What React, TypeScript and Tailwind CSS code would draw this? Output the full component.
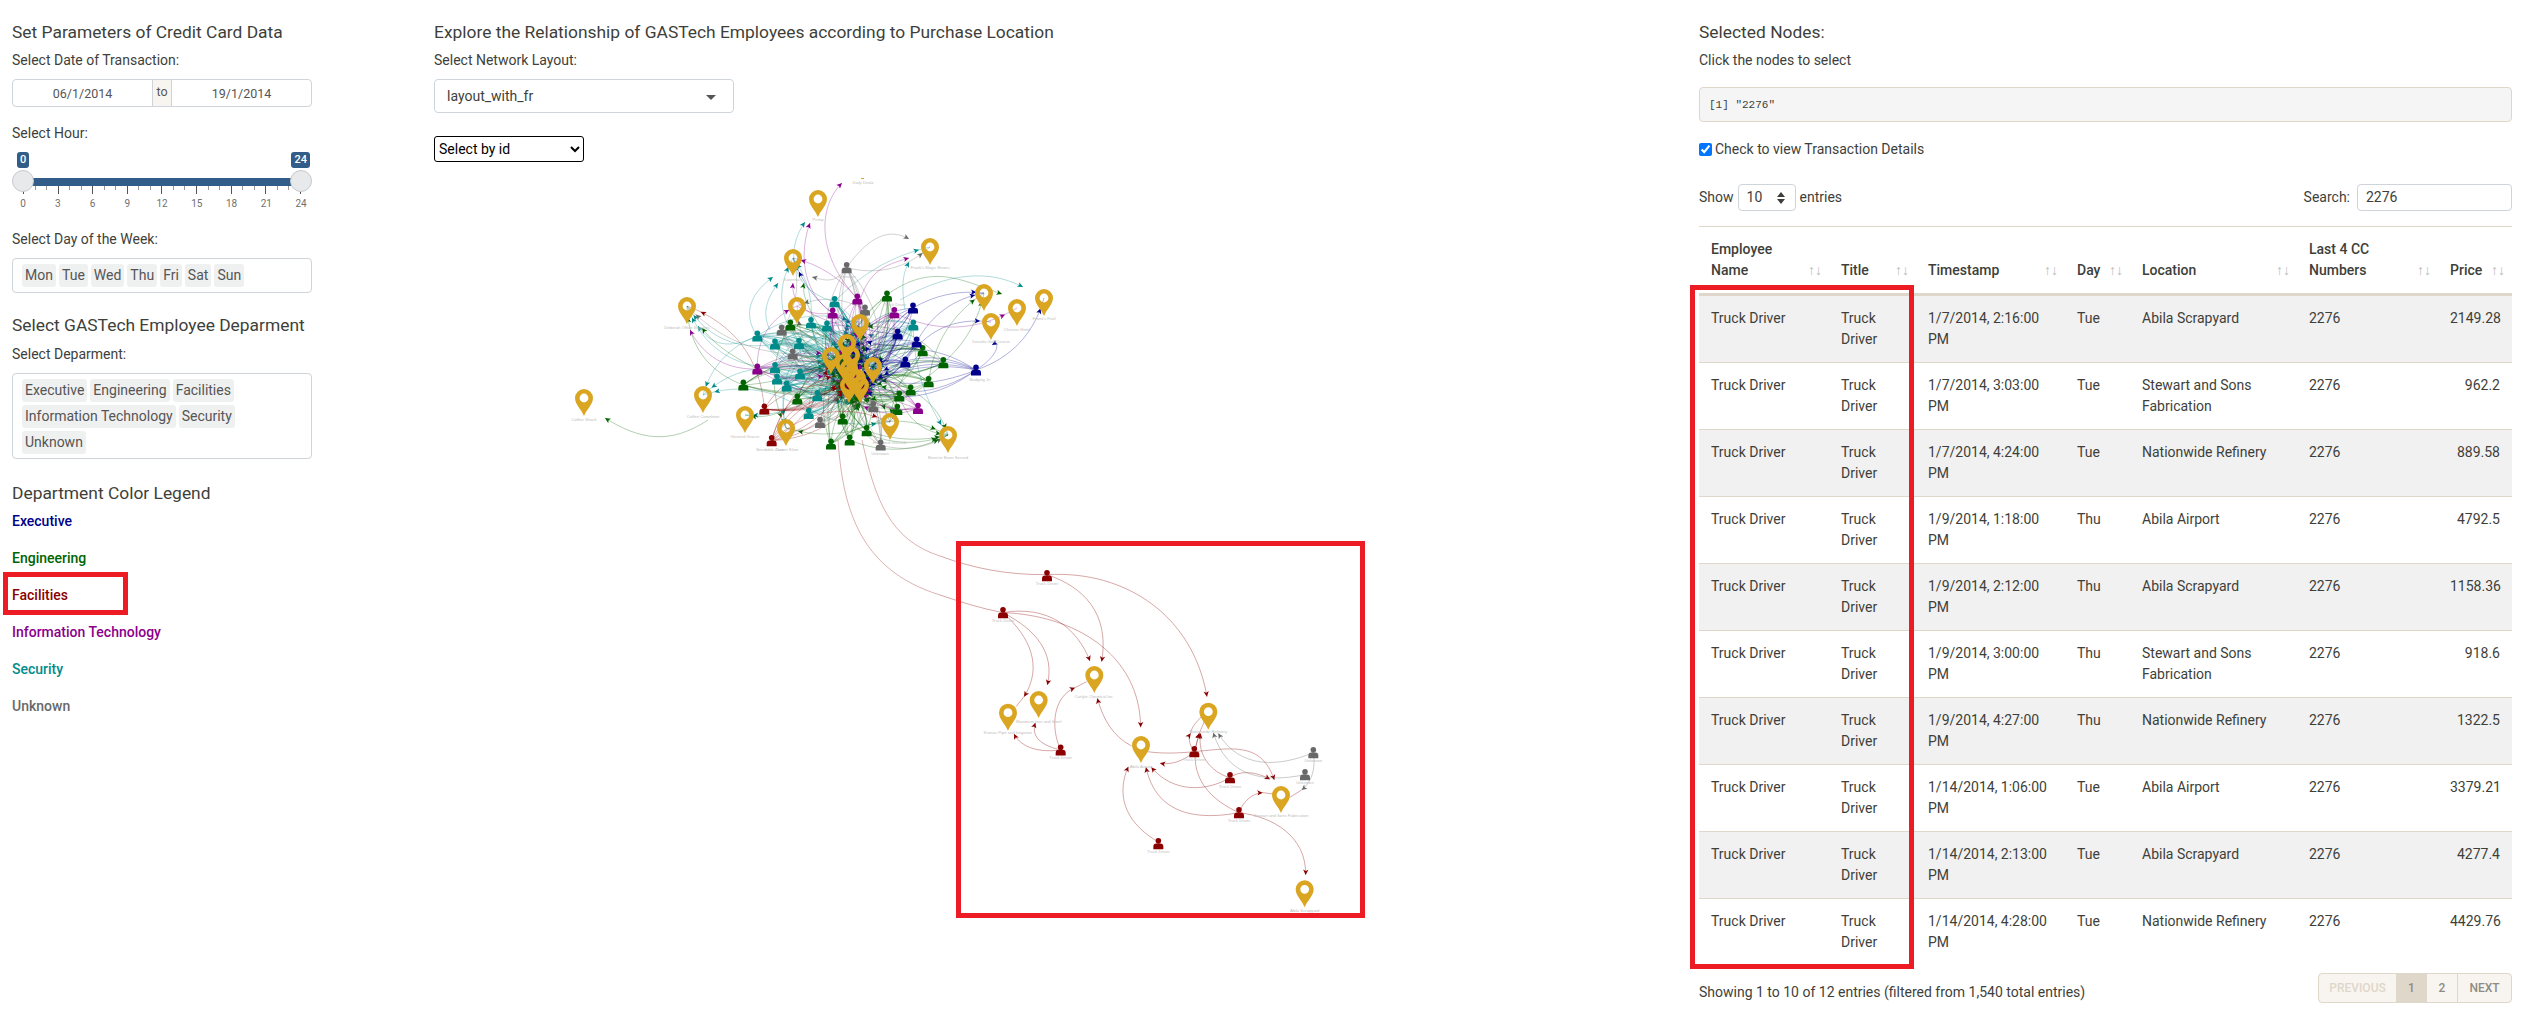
import React from "react";

const GOLD = "#daa520";
const C: Record<string, string> = { navy: "#00008b", green: "#006400", red: "#8b0000", purple: "#8b008b", teal: "#008b8b", grey: "#696969" };

type P = [number, number, string];
// upper cluster people, in page coordinates
const people: P[] = ([
  [172,408,"teal"],[225,432,"teal"],[297,430,"teal"],[225,503,"teal"],[231,537,"teal"],[300,522,"teal"],[260,558,"teal"],[352,587,"teal"],[326,640,"teal"],[404,305,"teal"],[333,368,"teal"],[381,378,"teal"],[640,375,"teal"],
  [440,203,"grey"],[245,390,"grey"],[278,462,"grey"],[495,330,"grey"],[360,667,"grey"],[520,620,"grey"],[542,735,"grey"],
  [561,288,"green"],[271,375,"green"],[130,555,"green"],[292,597,"green"],[428,657,"green"],[500,692,"green"],[393,732,"green"],[449,720,"green"],[668,452,"green"],[730,488,"green"],[686,545,"green"],[632,570,"green"],[598,588,"green"],[592,628,"green"],
  [472,297,"purple"],[398,339,"purple"],[583,338,"purple"],[172,507,"purple"],[654,625,"purple"],
  [639,324,"navy"],[593,402,"navy"],[650,426,"navy"],[616,486,"navy"],[828,510,"navy"],
  [193,627,"red"],[215,722,"red"],
] as P[]).map(([x, y, c]) => [700 + x / 3, 200 + y / 3, c] as P);

const outerPins: [number, number][] = [[818,199],[930,247],[793,258],[797,306],[687,306],[984,293],[1017,308],[1044,298],[991,322],[703,395],[745,415],[786,428],[890,422],[948,435]];
const centerPins: [number, number][] = [[860,323],[847,343],[831,356],[873,366],[851,355],[849,368],[844,363],[860,385],[849,385],[852,376],[857,378]];

const upperLabels: [number, number, string][] = [
  [863,184,"Daily Dealz"],[818,221,"Pump"],[930,269,"Frank's Magic Beans"],[793,281,"Katerina's"],[687,329,"Deborah Office Supplies"],[1017,331,"Chostus Hotel"],[1044,320,"Frank's Fuel"],[991,343,"Desafio Golf Course"],[703,418,"Coffee Cameleon"],[584,421,"Coffee Shack"],[745,438,"General Grocer"],[787,451,"Ouzeri Elian"],[890,444,"Hallowed Grounds"],[948,459,"Brew've Been Served"],[770,451,"Bendable Zero"],[880,455,"Unknown"],[847,278,"Unknown"],[895,306,"Truck Driver"],[980,381,"Badging Jr."],
];

const lowerPins: [number, number][] = [[204,548],[296,510],[463,435],[603,645],[805,545],[1023,795],[1094,1078]];
const lowerPeople: P[] = [[321,137,"red"],[189,248,"red"],[362,660,"red"],[763,665,"red"],[870,743,"red"],[897,848,"red"],[655,941,"red"],[1120,668,"grey"],[1095,734,"grey"]];
const lowerLabels: [number, number, string][] = [
  [321,165,"Truck Driver"],[189,276,"Truck Driver"],[362,688,"Truck Driver"],[763,693,"Truck Driver"],[870,775,"Truck Driver"],[897,876,"Truck Driver"],[655,970,"Truck Driver"],[1120,696,"Unknown"],[1095,762,"Unknown"],
  [463,505,"Carlyle Chemical Inc."],[296,580,"Maximum Iron and Steel"],[204,613,"Kronos Pipe and Irrigation"],[603,715,"Abila Airport"],[805,609,"Nationwide Refinery"],[1023,862,"Stewart and Sons Fabrication"],[1094,1147,"Abila Scrapyard"],
];
// cubic edges traced from the picture: colour, x0 y0 c1 c2 end
const lowerEdges: [string, number[]][] = [
  ["red",[189,248,320,225,410,290,450,393]],["red",[321,134,430,170,510,250,485,395]],["red",[321,134,560,120,760,260,801,500]],
  ["red",[189,248,400,255,600,370,602,592]],["red",[189,248,290,300,345,370,322,465]],["red",[189,248,270,320,310,410,252,500]],
  ["red",[362,660,300,668,245,655,222,612]],["red",[362,660,320,650,270,630,286,578]],["red",[362,660,330,590,340,500,405,473]],
  ["red",[575,648,520,620,490,570,472,505]],["red",[763,665,730,695,690,705,660,700]],["red",[763,665,745,640,745,620,752,610]],
  ["red",[763,665,770,640,775,625,778,610]],["red",[622,665,800,690,950,590,1003,750]],["red",[870,743,800,785,700,790,634,712]],
  ["red",[870,743,820,730,770,680,782,610]],["red",[870,743,900,720,950,725,990,748]],["red",[897,848,780,870,650,860,618,712]],
  ["red",[897,848,790,800,740,720,778,610]],["red",[897,848,910,815,935,790,968,788]],["red",[897,848,1000,860,1100,920,1097,1035]],
  ["red",[645,930,550,870,530,790,565,710]],["grey",[1120,668,1020,710,900,720,835,610]],["grey",[1095,734,970,760,860,740,820,608]],
  ["grey",[1122,680,1125,730,1110,760,1085,780]],
];
const lowerTails = ["M0 78C100 115 200 135 321 134","M0 195C60 215 120 235 189 248","M405 473L440 455","M252 500L228 530","M968 788L1000 792","M1050 802L1085 780","M752 610C755 590 770 575 785 560","M778 610L795 570"];

// edges of the upper cluster that are easy to see, the rest gets generated
const upperEdges: [string, number[]][] = [
  ["purple",[857,298,820,260,815,210,842,183]],["teal",[835,302,790,290,785,250,805,222]],["purple",[832,313,800,290,800,250,810,223]],
  ["grey",[847,267,870,235,890,228,909,239]],["grey",[847,267,835,285,825,280,812,277]],["green",[708,420,670,445,640,440,605,418]],
  ["purple",[860,300,870,270,885,265,909,258]],["teal",[905,310,900,280,905,270,909,262]],["green",[880,300,930,260,960,280,1002,294]],
  ["teal",[900,300,960,265,1000,275,1023,287]],["teal",[757,336,740,310,755,290,773,277]],["teal",[770,330,760,310,770,295,778,283]],
  ["green",[845,360,820,330,800,300,804,283]],["purple",[860,330,820,320,790,310,793,283]],["purple",[757,369,720,370,700,350,690,330]],
  ["teal",[757,336,730,350,710,345,698,326]],["green",[757,369,730,355,715,345,702,328]],["navy",[976,370,1000,355,1000,340,992,345]],
];

function rng(seed: number) {
  return () => {
    seed = (seed + 0x6d2b79f5) | 0;
    let t = Math.imul(seed ^ (seed >>> 15), 1 | seed);
    t = (t + Math.imul(t ^ (t >>> 7), 61 | t)) ^ t;
    return ((t ^ (t >>> 14)) >>> 0) / 4294967296;
  };
}

function generated() {
  const r = rng(77);
  const out: { color: string; pts: number[] }[] = [];
  const near = (x: number, y: number) => outerPins.filter((p) => Math.hypot(p[0] - x, p[1] - y) < 130);
  const add = (color: string, x: number, y: number, tx: number, ty: number) => {
    const dx = tx - x, dy = ty - y;
    const k = (r() > 0.5 ? 1 : -1) * (0.15 + r() * 0.2);
    const mx = (x + tx) / 2 - dy * k, my = (y + ty) / 2 + dx * k;
    out.push({ color, pts: [x, y, x + (mx - x) * 0.66, y + (my - y) * 0.66, tx + (mx - tx) * 0.66, ty + (my - ty) * 0.66, tx, ty] });
  };
  people.forEach(([x, y, c]) => {
    const count = c === "teal" ? 13 : 8;
    for (let i = 0; i < count; i++) {
      const p = centerPins[Math.floor(r() * centerPins.length)];
      add(c, x, y, p[0] + r() * 6 - 3, p[1] + r() * 22 - 2);
    }
    const n = near(x, y);
    if (n.length) {
      const p = n[Math.floor(r() * n.length)];
      add(c, x, y, p[0], p[1]);
    }
  });
  return out;
}

function Edge({ color, pts, back = 0 }: { color: string; pts: number[]; back?: number }) {
  const [x0, y0, a, b, c, d, x1, y1] = pts;
  const t = 1 - back;
  const px = (1-t)**3*x0 + 3*(1-t)**2*t*a + 3*(1-t)*t*t*c + t**3*x1;
  const py = (1-t)**3*y0 + 3*(1-t)**2*t*b + 3*(1-t)*t*t*d + t**3*y1;
  const tx = (1-t)*(1-t)*(a-x0) + 2*(1-t)*t*(c-a) + t*t*(x1-c);
  const ty = (1-t)*(1-t)*(b-y0) + 2*(1-t)*t*(d-b) + t*t*(y1-d);
  const deg = (Math.atan2(ty, tx) * 180) / Math.PI;
  return (
    <g>
      <path d={`M${x0} ${y0}C${a} ${b} ${c} ${d} ${x1} ${y1}`} fill="none" stroke={color} strokeOpacity={0.3} />
      <path d="M0 0L-5.5 -2.6L-4.2 0L-5.5 2.6Z" fill={color} transform={`translate(${px} ${py}) rotate(${deg})`} />
    </g>
  );
}

function Person({ x, y, color }: { x: number; y: number; color: string }) {
  return (
    <g transform={`translate(${x} ${y})`} fill={color}>
      <circle cy={-2.8} r={2.8} />
      <path d="M-5 5.6V3Q-5 -.2 -2 -.2H2Q5 -.2 5 3V5.6Z" />
    </g>
  );
}

function Pin({ x, y }: { x: number; y: number }) {
  return (
    <path
      transform={`translate(${x} ${y})`}
      fill={GOLD}
      fillRule="evenodd"
      d="M0 18C-2.5 11.5 -9 6.5 -9 0A9 9 0 1 1 9 0C9 6.5 2.5 11.5 0 18ZM0 -4.4A4.4 4.4 0 1 0 0 4.4A4.4 4.4 0 1 0 0 -4.4Z"
    />
  );
}

function Label({ x, y, children }: { x: number; y: number; children: string }) {
  return <text x={x} y={y} fontSize={4.2} textAnchor="middle" fill="#bdbdbd" fontFamily="Arial, 'Liberation Sans', sans-serif">{children}</text>;
}

function Network() {
  const edges = generated();
  const lx = (v: number) => 940 + v / 3;
  const ly = (v: number) => 530 + v / 3;
  return (
    <svg className="mt-[16px] block w-[1241px] h-[790px]" viewBox="434 178 1241 790">
      {edges.map((e, i) => <Edge key={i} color={C[e.color]} pts={e.pts} back={0.1} />)}
      {upperEdges.map(([c, pts], i) => <Edge key={i} color={C[c]} pts={pts} />)}
      <path d="M838 440C843 510 860 570 940 595" fill="none" stroke={C.red} strokeOpacity={0.3} />
      <path d="M862 440C875 500 890 540 940 556" fill="none" stroke={C.red} strokeOpacity={0.3} />
      <g transform="translate(940 530) scale(.3333)">
        {lowerTails.map((d, i) => <path key={i} d={d} fill="none" stroke={C.red} strokeWidth={3} strokeOpacity={0.35} />)}
        {lowerEdges.map(([c, pts], i) => (
          <g key={i}>
            <path d={`M${pts[0]} ${pts[1]}C${pts[2]} ${pts[3]} ${pts[4]} ${pts[5]} ${pts[6]} ${pts[7]}`} fill="none" stroke={C[c]} strokeWidth={3} strokeOpacity={0.35} />
            <path d="M0 0L-16 -8L-12 0L-16 8Z" fill={C[c]} transform={`translate(${pts[6]} ${pts[7]}) rotate(${(Math.atan2(pts[7] - pts[5], pts[6] - pts[4]) * 180) / Math.PI})`} />
          </g>
        ))}
      </g>
      {upperLabels.map(([x, y, t], i) => <Label key={i} x={x} y={y}>{t}</Label>)}
      {lowerLabels.map(([x, y, t], i) => <Label key={i} x={lx(x)} y={ly(y)}>{t}</Label>)}
      {people.map(([x, y, c], i) => <Person key={i} x={x} y={y} color={C[c]} />)}
      {lowerPeople.map(([x, y, c], i) => <Person key={i} x={lx(x)} y={ly(y)} color={C[c]} />)}
      <Pin x={584} y={398} />
      {outerPins.map(([x, y], i) => <Pin key={i} x={x} y={y} />)}
      {centerPins.map(([x, y], i) => <Pin key={i} x={x} y={y} />)}
      {lowerPins.map(([x, y], i) => <Pin key={i} x={lx(x)} y={ly(y)} />)}
      <rect x={861} y={178} width={3} height={1} fill={GOLD} />
    </svg>
  );
}

function Chip({ children }: { children: string }) {
  return <span className="h-[23px] px-[3px] rounded-[3px] bg-[#eff0f0] text-[#555] leading-[23px]">{children}</span>;
}

function HourSlider() {
  const ticks = Array.from({ length: 25 }, (_, i) => i);
  const nums = [0, 3, 6, 9, 12, 15, 18, 21, 24];
  return (
    <div className="relative h-[62px] mb-[15px]">
      <span className="absolute left-[5px] top-0 h-[16px] px-[3px] rounded-[3px] bg-[#325d88] text-white text-[11px] font-medium leading-[15px]">0</span>
      <span className="absolute right-[2px] top-0 h-[16px] px-[3px] rounded-[3px] bg-[#325d88] text-white text-[11px] font-medium leading-[15px]">24</span>
      <div className="absolute left-[11px] right-[11px] top-[26px] h-[8px] bg-[#325d88]" />
      <div className="absolute left-[11px] right-[11px] top-[34px] flex justify-between">
        {ticks.map((t) => (
          <span key={t} className={t % 3 === 0 ? "w-px h-[8px] bg-[#555]" : "w-px h-[4px] bg-[#999]"} />
        ))}
      </div>
      <div className="absolute left-[11px] right-[11px] top-[45px] flex justify-between text-[10px] leading-[14px] text-[#6f6f6f]">
        {nums.map((n) => (
          <span key={n} className="w-0 flex justify-center">{n}</span>
        ))}
      </div>
      <span className="absolute left-0 top-[18px] w-[22px] h-[22px] rounded-full bg-[#e8e9eb] border border-[#c6c9ce]" />
      <span className="absolute right-0 top-[18px] w-[22px] h-[22px] rounded-full bg-[#e8e9eb] border border-[#c6c9ce]" />
    </div>
  );
}

const rows = [
  ["1/7/2014, 2:16:00 PM", "Tue", "Abila Scrapyard", "2149.28"],
  ["1/7/2014, 3:03:00 PM", "Tue", "Stewart and Sons Fabrication", "962.2"],
  ["1/7/2014, 4:24:00 PM", "Tue", "Nationwide Refinery", "889.58"],
  ["1/9/2014, 1:18:00 PM", "Thu", "Abila Airport", "4792.5"],
  ["1/9/2014, 2:12:00 PM", "Thu", "Abila Scrapyard", "1158.36"],
  ["1/9/2014, 3:00:00 PM", "Thu", "Stewart and Sons Fabrication", "918.6"],
  ["1/9/2014, 4:27:00 PM", "Thu", "Nationwide Refinery", "1322.5"],
  ["1/14/2014, 1:06:00 PM", "Tue", "Abila Airport", "3379.21"],
  ["1/14/2014, 2:13:00 PM", "Tue", "Abila Scrapyard", "4277.4"],
  ["1/14/2014, 4:28:00 PM", "Tue", "Nationwide Refinery", "4429.76"],
];

function Th({ className, children }: { className: string; children: React.ReactNode }) {
  return (
    <th className={`relative align-bottom p-3 pr-[26px] font-medium text-left border-b-[3px] border-[#dfd7ca] ${className}`}>
      {children}
      <span className="absolute right-[7px] bottom-[12px] text-[14px] leading-[21px] font-normal text-[#bbbbbb]">↑↓</span>
    </th>
  );
}

export default function App() {
  const h4 = "text-[17.4px] leading-[22px] font-normal text-[#3e3f3a]";
  const box = "border border-[#ced4da] rounded-[4px] bg-white";
  return (
    <div className="relative w-[2534px] h-[1015px] overflow-hidden bg-white text-[14px] leading-[21px] text-[#3e3f3a] font-['Roboto',sans-serif]">
      <div className="flex">
        <div className="w-[422px] px-3 pt-[21px]">
          <h4 className={`${h4} mb-[7px]`}>Set Parameters of Credit Card Data</h4>
          <div className="mb-[8px]">Select Date of Transaction:</div>
          <div className={`${box} w-[300px] h-[28px] flex items-center text-center text-[12.5px] text-[#555] mb-[16px]`}>
            <span className="flex-1">06/1/2014</span>
            <span className="w-[20px] h-full bg-[#f8f5f0] border-x border-[#ced4da] leading-[24px]">to</span>
            <span className="flex-1">19/1/2014</span>
          </div>
          <div className="mb-[8px]">Select Hour:</div>
          <div className="w-[300px]"><HourSlider /></div>
          <div className="mb-[8px]">Select Day of the Week:</div>
          <div className={`${box} w-[300px] h-[35px] flex gap-[3px] pl-[9px] pt-[5px] mb-[21px]`}>
            {["Mon", "Tue", "Wed", "Thu", "Fri", "Sat", "Sun"].map((d) => <Chip key={d}>{d}</Chip>)}
          </div>
          <h4 className={`${h4} mb-[8px]`}>Select GASTech Employee Deparment</h4>
          <div className="mb-[8px]">Select Deparment:</div>
          <div className={`${box} w-[300px] h-[86px] flex flex-wrap content-start gap-[3px] pl-[9px] pr-[20px] pt-[5px] mb-[23px]`}>
            {["Executive", "Engineering", "Facilities", "Information Technology", "Security", "Unknown"].map((d) => <Chip key={d}>{d}</Chip>)}
          </div>
          <h4 className={`${h4} mb-[7px]`}>Department Color Legend</h4>
          <div className="flex flex-col gap-4 font-medium">
            <span className="text-[#00008b]">Executive</span>
            <span className="text-[#006400]">Engineering</span>
            <span className="text-[#8b0000]">Facilities</span>
            <span className="text-[#8b008b]">Information Technology</span>
            <span className="text-[#008b8b]">Security</span>
            <span className="text-[#696969]">Unknown</span>
          </div>
        </div>

        <div className="w-[1265px] px-3 pt-[21px]">
          <h4 className={`${h4} mb-[7px]`}>Explore the Relationship of GASTech Employees according to Purchase Location</h4>
          <div className="mb-[8px]">Select Network Layout:</div>
          <div className={`${box} relative w-[300px] h-[34px] pl-[12px] leading-[32px]`}>
            layout_with_fr
            <span className="absolute right-[17px] top-[15px] border-x-[5px] border-t-[5px] border-x-transparent border-t-[#555]" />
          </div>
          <select className="block mt-[23px] w-[150px] h-[26px] border border-black rounded-[3px] bg-white text-black text-[14px]">
            <option>Select by id</option>
          </select>
          <Network />
        </div>

        <div className="flex-1 pl-3 pr-[22px] pt-[21px]">
          <h4 className={`${h4} mb-[7px]`}>Selected Nodes:</h4>
          <div>Click the nodes to select</div>
          <pre className="mt-[16px] h-[35px] px-[9px] border border-[#dfd7ca] rounded-[4px] bg-[#f5f5f5] text-[11px] leading-[35px] font-['Liberation_Mono',monospace]">[1] "2276"</pre>
          <label className="flex items-center gap-[3px] mt-[17px] h-[21px]">
            <input type="checkbox" defaultChecked className="w-[13px] h-[13px]" />
            <span>Check to view Transaction Details</span>
          </label>
          <div className="flex items-center justify-between mt-[24px] h-[27px]">
            <div className="flex items-center gap-[4px]">
              <span>Show</span>
              <span className={`${box} relative w-[58px] h-[27px] pl-[8px] leading-[25px]`}>
                10
                <svg className="absolute right-[10px] top-[7px]" width="8" height="12" viewBox="0 0 8 12" fill="#3e3f3a"><path d="M4 0L8 5H0ZM0 7H8L4 12Z" /></svg>
              </span>
              <span>entries</span>
            </div>
            <div className="flex items-center gap-[7px]">
              <span>Search:</span>
              <span className={`${box} w-[155px] h-[27px] pl-[8px] leading-[25px]`}>2276</span>
            </div>
          </div>
          <table className="mt-[15px] w-[813px] table-fixed border-separate border-spacing-0 border-t border-[#dfd7ca]">
            <thead>
              <tr>
                <Th className="w-[130px]">Employee Name</Th>
                <Th className="w-[87px]">Title</Th>
                <Th className="w-[149px]">Timestamp</Th>
                <Th className="w-[65px]">Day</Th>
                <Th className="w-[167px]">Location</Th>
                <Th className="w-[141px]">Last 4 CC Numbers</Th>
                <Th className="w-[74px] !pr-[12px]">Price</Th>
              </tr>
            </thead>
            <tbody>
              {rows.map((r, i) => (
                <tr key={i} className={i % 2 === 0 ? "bg-[#f1f1f1]" : ""}>
                  {["Truck Driver", "Truck Driver", r[0], r[1], r[2], "2276"].map((v, j) => (
                    <td key={j} className={`p-3 align-top ${i > 0 ? "border-t border-[#dfd7ca]" : ""}`}>{v}</td>
                  ))}
                  <td className={`p-3 align-top text-right ${i > 0 ? "border-t border-[#dfd7ca]" : ""}`}>{r[3]}</td>
                </tr>
              ))}
            </tbody>
          </table>
          <div className="flex items-end justify-between mt-[8px]">
            <span>Showing 1 to 10 of 12 entries (filtered from 1,540 total entries)</span>
            <div className="flex h-[30px] border border-[#dfd7ca] rounded-[4px] bg-[#f8f5f0] text-[12px] font-medium leading-[28px] text-center text-[#8e8c84]">
              <span className="w-[77px] text-[#dfd7ca]">PREVIOUS</span>
              <span className="w-[31px] bg-[#dfd7ca]">1</span>
              <span className="w-[31px] border-r border-[#dfd7ca]">2</span>
              <span className="w-[53px]">NEXT</span>
            </div>
          </div>
        </div>
      </div>

      <div className="absolute left-[3px] top-[572px] w-[125px] h-[43px] border-[5px] border-[#ed1c24]" />
      <div className="absolute left-[956px] top-[541px] w-[409px] h-[377px] border-[5px] border-[#ed1c24]" />
      <div className="absolute left-[1690px] top-[285px] w-[224px] h-[684px] border-[5px] border-[#ed1c24]" />
    </div>
  );
}
